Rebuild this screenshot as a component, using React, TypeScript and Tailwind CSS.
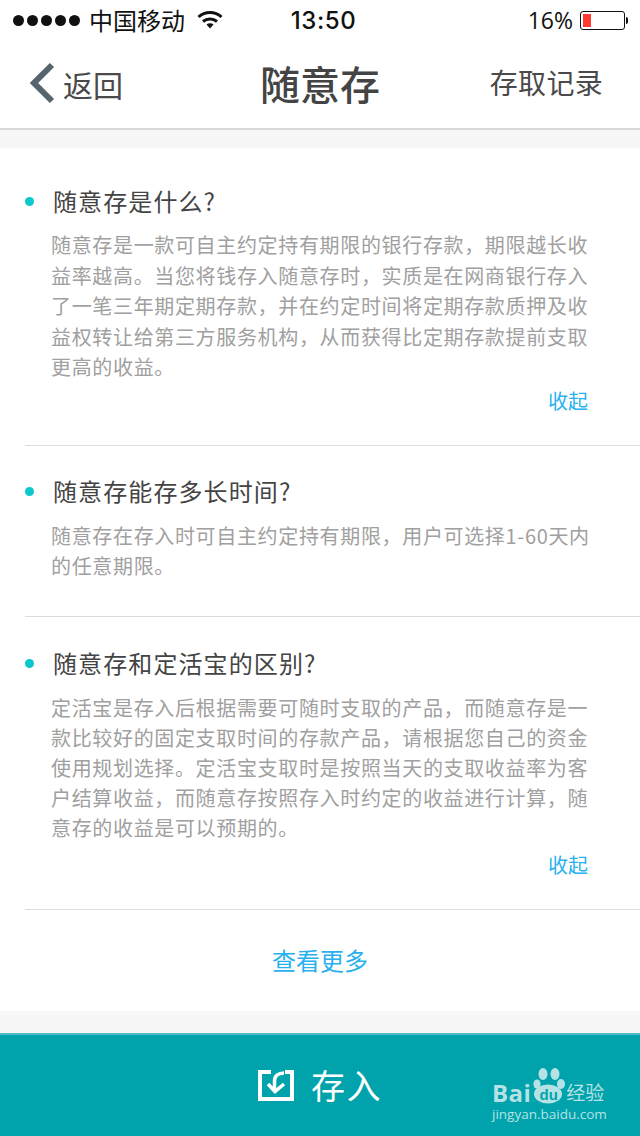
const cjk = "font-['Noto_Sans_CJK_SC',sans-serif]";

const faqs = [
  {
    title: "随意存是什么?",
    lines: [
      "随意存是一款可自主约定持有期限的银行存款，期限越长收",
      "益率越高。当您将钱存入随意存时，实质是在网商银行存入",
      "了一笔三年期定期存款，并在约定时间将定期存款质押及收",
      "益权转让给第三方服务机构，从而获得比定期存款提前支取",
      "更高的收益。",
    ],
    box: "h-[298px] pt-[36px]",
    body: "mt-[12px] leading-[30.5px]",
    more: "mt-[3px]",
  },
  {
    title: "随意存能存多长时间?",
    lines: ["随意存在存入时可自主约定持有期限，用户可选择1-60天内", "的任意期限。"],
    box: "h-[171px] pt-[28px]",
    body: "mt-[13px] leading-[30px]",
  },
  {
    title: "随意存和定活宝的区别?",
    lines: [
      "定活宝是存入后根据需要可随时支取的产品，而随意存是一",
      "款比较好的固定支取时间的存款产品，请根据您自己的资金",
      "使用规划选择。定活宝支取时是按照当天的支取收益率为客",
      "户结算收益，而随意存按照存入时约定的收益进行计算，随",
      "意存的收益是可以预期的。",
    ],
    box: "h-[293px] pt-[29px]",
    body: "mt-[13px] leading-[30px]",
    more: "mt-[7px]",
  },
];

function StatusBar() {
  return (
    <div className="flex h-10 items-center justify-between pl-[13px] pr-[12px] text-[#111]">
      <div className="flex w-[240px] items-center">
        <div className="flex gap-[3px]">
          {[0, 1, 2, 3, 4].map((i) => (
            <span key={i} className="h-[11px] w-[11px] rounded-full bg-[#111]" />
          ))}
        </div>
        <span className={`${cjk} ml-[9px] text-[24px] leading-none`}>中国移动</span>
        <svg className="ml-[12px]" width="26" height="20" viewBox="0 0 26 20" fill="none">
          <path d="M1.5 7 C8 1 18 1 24.5 7" stroke="#111" strokeWidth="3" />
          <path d="M6 11.5 C10 8 16 8 20 11.5" stroke="#111" strokeWidth="3" />
          <path d="M9.5 14.5 L13 18.5 L16.5 14.5 C14.5 12.8 11.5 12.8 9.5 14.5 Z" fill="#111" />
        </svg>
      </div>
      <span className="ml-[6px] mt-[2px] font-['Inter',sans-serif] text-[24px] font-medium leading-none tracking-[0.6px]">
        13:50
      </span>
      <div className="flex w-[240px] items-center justify-end">
        <span className="font-['Open_Sans',sans-serif] text-[23px] leading-none">16%</span>
        <div className="ml-[7px] flex h-[19px] w-[45px] items-center rounded-[3px] border border-[#111] p-[2px]">
          <div className="h-full w-[8px] bg-[#ff3b30]" />
        </div>
        <div className="ml-[1px] h-[7px] w-[2px] rounded-r-[2px] bg-[#111]" />
      </div>
    </div>
  );
}

function NavBar() {
  return (
    <div className={`${cjk} relative flex h-[90px] items-center justify-between border-b-2 border-[#d8d8d8] pb-[3px] pl-[29px] pr-[37px]`}>
      <div className="flex items-center">
        <svg width="27" height="42" viewBox="0 0 27 42" fill="none">
          <path d="M23 3 L5 21 L23 39" stroke="#56646e" strokeWidth="6" />
        </svg>
        <span className="ml-[7px] mt-[2px] text-[30px] leading-none text-[#4a4a4a]">返回</span>
      </div>
      <span className="absolute left-0 right-0 top-[15px] text-center text-[40px] font-medium leading-[56px] text-[#444]">
        随意存
      </span>
      <span className="mb-[2px] text-[28px] leading-none tracking-[0.3px] text-[#4a4a4a]">存取记录</span>
    </div>
  );
}

function FaqItem({ title, lines, box, body, more }: { title: string; lines: string[]; box: string; body: string; more?: string }) {
  return (
    <div className={`${box} ml-[25px] border-b border-[#dcdcdc]`}>
      <div className="flex h-[34px] items-center">
        <span className="h-[9px] w-[9px] rounded-full bg-[#0cc7cc]" />
        <span className="ml-[19px] text-[24px] leading-none tracking-[1.1px] text-[#444]">{title}</span>
      </div>
      <div className={`${body} ml-[26px] text-[20px] tracking-[0.66px] text-[#a0a0a0]`}>
        {lines.map((line) => (
          <div key={line} className="whitespace-nowrap">
            {line}
          </div>
        ))}
      </div>
      {more && (
        <div className={`${more} pr-[52px] text-right text-[20px] leading-[30px] text-[#29b0ef]`}>收起</div>
      )}
    </div>
  );
}

function BaiduMark() {
  return (
    <div className="absolute left-[492px] top-[1066px] w-[116px] text-[#b4e2e5]">
      <div className="flex h-[39px] items-end">
        <span className="mb-[3px] font-['Open_Sans',sans-serif] text-[24px] font-bold leading-[18px] tracking-[0.4px]">Bai</span>
        <span className="relative flex h-[39px] w-[35px] items-end justify-center">
          <svg className="absolute left-0 top-0" width="35" height="39" viewBox="0 0 35 39" fill="#b4e2e5">
            <ellipse cx="6" cy="18" rx="3.5" ry="4.500" />
            <ellipse cx="12" cy="8" rx="4.500" ry="6" />
            <ellipse cx="24" cy="8" rx="4.500" ry="6" />
            <ellipse cx="30" cy="18" rx="4" ry="5" />
            <ellipse cx="17" cy="28" rx="14" ry="9.500" />
          </svg>
          <span className="relative mb-[3px] font-['Liberation_Sans',sans-serif] text-[15px] font-bold leading-none text-[#00a3ac]">du</span>
        </span>
        <span className={`${cjk} mb-[1px] text-[19px] font-normal leading-[24px]`}>经验</span>
      </div>
      <div className="whitespace-nowrap font-['Open_Sans',sans-serif] text-[13.5px] leading-[18px]">
        jingyan.baidu.com
      </div>
    </div>
  );
}

export default function App() {
  return (
    <div className={`${cjk} relative h-[1136px] w-[640px] overflow-hidden bg-[#f7f7f7]`}>
      <div className="bg-white">
        <StatusBar />
        <NavBar />
      </div>
      <div className="mt-[18px] h-[863px] bg-white">
        {faqs.map((f) => (
          <FaqItem key={f.title} {...f} />
        ))}
        <div className="flex h-[101px] items-center justify-center pb-[1px] text-[24px] text-[#29b0ef]">查看更多</div>
      </div>
      <div className="mt-[22px] flex h-[103px] items-center justify-center border-t-2 border-[#4dbcc3] bg-[#00a3ac] pb-[1px]">
        <svg width="36" height="31" viewBox="0 0 36 31" fill="none">
          <path d="M13 2 H2 V29 H34 V2 H27" stroke="#fff" strokeWidth="4" />
          <path d="M26 3 C20 3 16.500 6 16.500 11 V21" stroke="#fff" strokeWidth="3.500" />
          <path d="M10 14 L17 21.500 L26 14" stroke="#fff" strokeWidth="3.500" />
        </svg>
        <span className="ml-[17px] text-[34px] leading-none tracking-[1.5px] text-white">存入</span>
      </div>
      <BaiduMark />
    </div>
  );
}
